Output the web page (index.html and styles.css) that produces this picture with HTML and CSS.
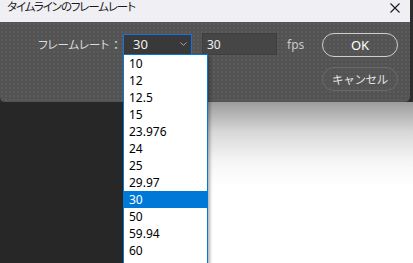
FILE: index.html
```html
<!DOCTYPE html>
<html lang="ja">
<head>
    <meta charset="UTF-8">
    <meta name="viewport" content="width=device-width, initial-scale=1.0">
    <title>タイムラインのフレームレート</title>
    <link rel="stylesheet" href="styles.css">
</head>
<body>
    <div class="screen">
        <div class="top">
            <div class="dialog">
                <div class="titlebar">
                    <span class="title">タイムラインのフレームレート</span>
                    <svg class="close" width="10" height="10" viewBox="0 0 10 10">
                        <path d="M0.5 0.5 L9.5 9.5 M9.5 0.5 L0.5 9.5" stroke="#1a1a1a" stroke-width="1.1" fill="none"/>
                    </svg>
                </div>
                <div class="dialog-body">
                    <div class="field-row">
                        <label class="field-label">フレームレート<span class="colon">：</span></label>
                        <div class="select">
                            <span>30</span>
                            <svg class="chevron" width="7" height="4" viewBox="0 0 7 4">
                                <path d="M0.5 0.5 L3.5 3.3 L6.5 0.5" stroke="#a8a8a8" stroke-width="1" fill="none"/>
                            </svg>
                        </div>
                        <div class="text-input">30</div>
                        <span class="unit">fps</span>
                    </div>
                    <div class="buttons">
                        <button class="btn btn-primary">OK</button>
                        <button class="btn">キャンセル</button>
                    </div>
                </div>
            </div>
            <div class="edge"></div>
        </div>
        <div class="below">
            <div class="dark-area"></div>
            <div class="shadow-area"></div>
        </div>

        <ul class="dropdown">
            <li>10</li>
            <li>12</li>
            <li>12.5</li>
            <li>15</li>
            <li>23.976</li>
            <li>24</li>
            <li>25</li>
            <li>29.97</li>
            <li class="selected">30</li>
            <li>50</li>
            <li>59.94</li>
            <li>60</li>
        </ul>
    </div>
</body>
</html>
```

FILE: styles.css
```css
body {
    margin: 0;
    padding: 0;
    font-family: "Noto Sans", "Noto Sans CJK JP", sans-serif;
    font-feature-settings: "palt";
    overflow: hidden;
}

.screen {
    position: relative;
    width: 413px;
    height: 263px;
    display: flex;
    flex-direction: column;
}

.top {
    display: flex;
    background-color: #2d2d2d;
}

.dialog {
    width: 410px;
}

.edge {
    width: 3px;
    background-color: #2d2d2d;
}

.titlebar {
    height: 22px;
    display: flex;
    align-items: center;
    justify-content: space-between;
    padding: 0 10px 8px 7px;
    box-sizing: border-box;
    background-color: #f0f0f4;
}

.title {
    font-size: 11.5px;
    color: #1a1a1a;
    line-height: 12px;
    letter-spacing: -1.1px;
}

.close {
    display: block;
    margin-top: 2px;
}

.dialog-body {
    height: 80px;
    box-sizing: border-box;
    padding: 11px 12px 0 38px;
    display: flex;
    background-color: #535353;
    background-image: radial-gradient(rgba(255, 255, 255, 0.05) 0.7px, transparent 0.9px);
    background-size: 4px 4px;
    border-radius: 0 0 5px 5px;
}

.field-row {
    display: flex;
    align-items: center;
    height: 22px;
    color: #d8d8d8;
    font-size: 12px;
}

.field-label {
    width: 85px;
    font-size: 11.5px;
    letter-spacing: -0.1px;
    color: #dcdcdc;
}

.colon {
    margin-left: 4px;
}

.select {
    width: 69px;
    height: 21px;
    box-sizing: border-box;
    display: flex;
    align-items: center;
    justify-content: space-between;
    padding: 0 4px 0 9px;
    border: 1px solid #1473e6;
    background-color: #393939;
    color: #f0f0f0;
    font-size: 13px;
}

.chevron {
    display: block;
}

.text-input {
    width: 75px;
    height: 22px;
    box-sizing: border-box;
    margin-left: 10px;
    padding-left: 4px;
    display: flex;
    align-items: center;
    border: 1px solid #3e3e3e;
    background-color: #464646;
    color: #f0f0f0;
    font-size: 12px;
}

.unit {
    margin-left: 10px;
    color: #c8c8c8;
}

.buttons {
    margin-left: auto;
    display: flex;
    flex-direction: column;
    gap: 10px;
}

.btn {
    width: 76px;
    height: 24px;
    padding: 0;
    border: 1.5px solid #6a6a6a;
    border-radius: 12px;
    background: transparent;
    color: #e4e4e4;
    font-family: inherit;
    font-size: 11.5px;
    letter-spacing: -0.3px;
}

.btn-primary {
    border-color: #cfcfcf;
    color: #ffffff;
    font-size: 13px;
    letter-spacing: 0;
}

.below {
    flex: 1;
    display: flex;
}

.dark-area {
    width: 124px;
    background-color: #272727;
}

.shadow-area {
    flex: 1;
    background: linear-gradient(#9c9c9c, #d8d8d8 30px, #f6f6f6 60px, #ffffff 85px);
}

.dropdown {
    position: absolute;
    left: 123px;
    top: 54px;
    width: 85px;
    height: 215px;
    box-sizing: border-box;
    margin: 0;
    padding: 0;
    list-style: none;
    background-color: #fff;
    border: 1px solid #0078d7;
    box-shadow: 2px 2px 3px rgba(0, 0, 0, 0.3);
    font-size: 12px;
    color: #000;
}

.dropdown li {
    height: 17px;
    line-height: 17px;
    padding-left: 5px;
}

.dropdown li.selected {
    background-color: #0078d7;
    color: #fff;
}
```
